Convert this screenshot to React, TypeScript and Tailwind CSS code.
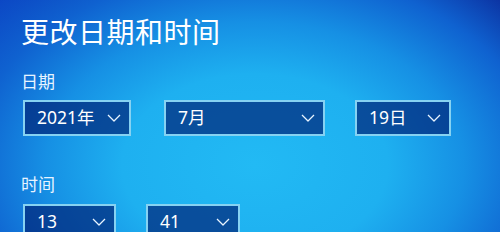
type Pick = { value: string; width: string };

const datePicks: Pick[] = [
  { value: '2021年', width: 'w-[108px]' },
  { value: '7月', width: 'w-[161px]' },
  { value: '19日', width: 'w-[96px]' },
];

const timePicks: Pick[] = [
  { value: '13', width: 'w-[93px]' },
  { value: '41', width: 'w-[94px]' },
];

function Chevron() {
  return (
    <svg width="14" height="8" viewBox="0 0 14 8" fill="none" className="text-[#e8f4ff]">
      <path d="M1 1l6 6 6-6" stroke="currentColor" strokeWidth="1.3" strokeLinejoin="round" />
    </svg>
  );
}

function ComboBox({ value, width }: Pick) {
  return (
    <div
      className={`${width} h-[36px] flex items-center justify-between border-2 border-[#86d2f2] bg-[#002478]/70 pl-[12px] pr-[8px]`}
    >
      <span className="text-[17.5px] leading-none text-white">{value}</span>
      <Chevron />
    </div>
  );
}

export default function App() {
  return (
    <div className="w-[500px] h-[232px] overflow-hidden bg-[radial-gradient(ellipse_380px_260px_at_255px_165px,#22baf4_0%,#1eb0f0_35%,#1690e4_55%,#0f62d0_75%,rgba(15,98,208,0)_100%),linear-gradient(to_right,#0a3cc0,#0a1888)] pl-[21px] pt-[18px] font-['Noto_Sans','Noto_Sans_CJK_SC',sans-serif] text-white">
      <h1 className="text-[28px] leading-none tracking-[0.5px]">更改日期和时间</h1>

      <div className="mt-[27px] text-[17px] leading-none text-[#e6f3ff]">日期</div>
      <div className="mt-[10px] ml-[2px] flex gap-[30px]">
        {datePicks.map((p, i) => (
          <div key={p.value} className={i === 1 ? 'ml-[3px]' : ''}>
            <ComboBox {...p} />
          </div>
        ))}
      </div>

      <div className="mt-[40px] text-[17px] leading-none text-[#e6f3ff]">时间</div>
      <div className="mt-[11px] ml-[2px] flex gap-[30px]">
        {timePicks.map((p) => (
          <ComboBox key={p.value} {...p} />
        ))}
      </div>
    </div>
  );
}
